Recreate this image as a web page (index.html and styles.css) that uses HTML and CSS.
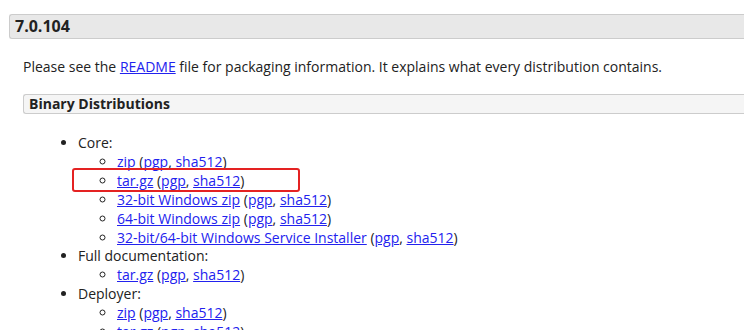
FILE: index.html
```html
<!DOCTYPE html>
<html lang="en">
<head>
    <meta charset="UTF-8">
    <meta name="viewport" content="width=device-width, initial-scale=1.0">
    <title>Tomcat 7.0.104 Downloads</title>
    <link rel="stylesheet" href="styles.css">
</head>
<body>
    <div class="page">
        <h3 class="version">7.0.104</h3>

        <div class="section">
            <p>Please see the <a href="#">README</a> file for packaging information. It explains what every distribution contains.</p>

            <h4 class="subhead">Binary Distributions</h4>

            <ul class="dist">
                <li>Core:
                    <ul>
                        <li><a href="#">zip</a> (<a href="#">pgp</a>, <a href="#">sha512</a>)</li>
                        <li class="marked"><span class="mark"></span><a href="#">tar.gz</a> (<a href="#">pgp</a>, <a href="#">sha512</a>)</li>
                        <li><a href="#">32-bit Windows zip</a> (<a href="#">pgp</a>, <a href="#">sha512</a>)</li>
                        <li><a href="#">64-bit Windows zip</a> (<a href="#">pgp</a>, <a href="#">sha512</a>)</li>
                        <li><a href="#">32-bit/64-bit Windows Service Installer</a> (<a href="#">pgp</a>, <a href="#">sha512</a>)</li>
                    </ul>
                </li>
                <li>Full documentation:
                    <ul>
                        <li><a href="#">tar.gz</a> (<a href="#">pgp</a>, <a href="#">sha512</a>)</li>
                    </ul>
                </li>
                <li>Deployer:
                    <ul>
                        <li><a href="#">zip</a> (<a href="#">pgp</a>, <a href="#">sha512</a>)</li>
                        <li><a href="#">tar.gz</a> (<a href="#">pgp</a>, <a href="#">sha512</a>)</li>
                    </ul>
                </li>
            </ul>
        </div>
    </div>
</body>
</html>
```

FILE: styles.css
```css
body {
    font-family: "Open Sans", "Liberation Sans", sans-serif;
    font-size: 14px;
    line-height: 19px;
    color: #222;
    margin: 0;
    background: #fff;
}

a {
    color: #2222ee;
}

.page {
    padding-top: 14px;
}

.version {
    margin: 0 0 0 9px;
    padding: 0 5px;
    height: 23px;
    line-height: 23px;
    font-size: 16px;
    font-weight: bold;
    background-color: #e8e8e8;
    border: 1px solid #ccc;
    border-right: none;
    border-radius: 3px 0 0 3px;
}

.section {
    padding-left: 23px;
}

.section p {
    margin: 18px 0 0;
}

.subhead {
    margin: 18px 0 0;
    padding: 0 5px;
    height: 18px;
    line-height: 18px;
    font-size: 14px;
    font-weight: bold;
    background-color: #f5f5f5;
    border: 1px solid #ccc;
    border-right: none;
    border-radius: 3px 0 0 3px;
}

.dist {
    margin: 20px 0 0;
    padding-left: 55px;
    list-style: disc;
}

.dist li {
    line-height: 18.9px;
}

.dist ul {
    margin: 0;
    padding-left: 39px;
    list-style: circle;
}

.marked {
    position: relative;
}

.mark {
    position: absolute;
    left: -45px;
    top: -4px;
    width: 224px;
    height: 20px;
    border: 2px solid #e42222;
    border-radius: 3px;
}
```
